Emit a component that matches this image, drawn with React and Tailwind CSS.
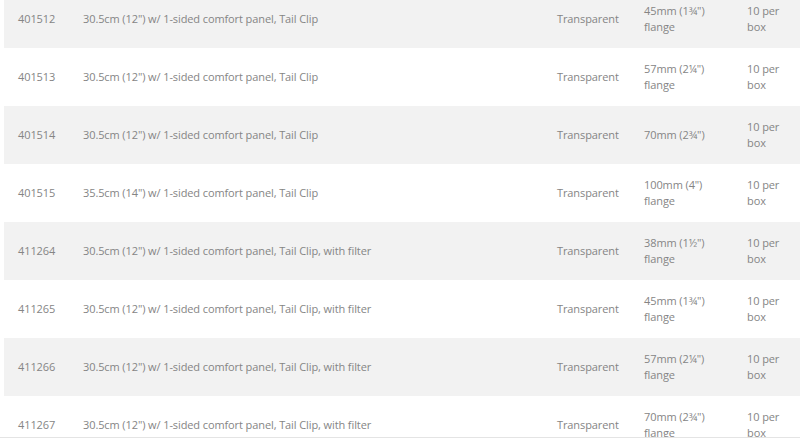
import React from "react";

const rows = [
  ["401512", "30.5cm (12\") w/ 1-sided comfort panel, Tail Clip", ["45mm (1¾\")", "flange"]],
  ["401513", "30.5cm (12\") w/ 1-sided comfort panel, Tail Clip", ["57mm (2¼\")", "flange"]],
  ["401514", "30.5cm (12\") w/ 1-sided comfort panel, Tail Clip", ["70mm (2¾\")"]],
  ["401515", "35.5cm (14\") w/ 1-sided comfort panel, Tail Clip", ["100mm (4\")", "flange"]],
  ["411264", "30.5cm (12\") w/ 1-sided comfort panel, Tail Clip, with filter", ["38mm (1½\")", "flange"]],
  ["411265", "30.5cm (12\") w/ 1-sided comfort panel, Tail Clip, with filter", ["45mm (1¾\")", "flange"]],
  ["411266", "30.5cm (12\") w/ 1-sided comfort panel, Tail Clip, with filter", ["57mm (2¼\")", "flange"]],
  ["411267", "30.5cm (12\") w/ 1-sided comfort panel, Tail Clip, with filter", ["70mm (2¾\")", "flange"]],
];

export default function App() {
  return (
    <div className="w-[800px] h-[442px] bg-white overflow-hidden" style={{ fontFamily: '"Open Sans", "Liberation Sans", sans-serif' }}>
      <div className="h-[438px] overflow-hidden border-b border-[#e4e4e4]">
        <div className="mt-[-10px] pl-[4px] text-[11px] leading-[16px] tracking-[-0.1px] text-[#858585]">
          {rows.map((r, i) => (
            <div
              key={r[0]}
              className={`grid grid-cols-[65px_474px_87px_103px_1fr] h-[58px] items-center ${i % 2 === 0 ? "bg-[#f2f2f2]" : "bg-white"}`}
            >
              <div className="pl-[14px]">{r[0]}</div>
              <div className="pl-[14px]">{r[1]}</div>
              <div className="pl-[14px]">Transparent</div>
              <div className="pl-[14px]">
                {r[2].map((l) => (
                  <div key={l}>{l}</div>
                ))}
              </div>
              <div className="pl-[14px]">
                <div>10 per</div>
                <div>box</div>
              </div>
            </div>
          ))}
        </div>
      </div>
    </div>
  );
}
